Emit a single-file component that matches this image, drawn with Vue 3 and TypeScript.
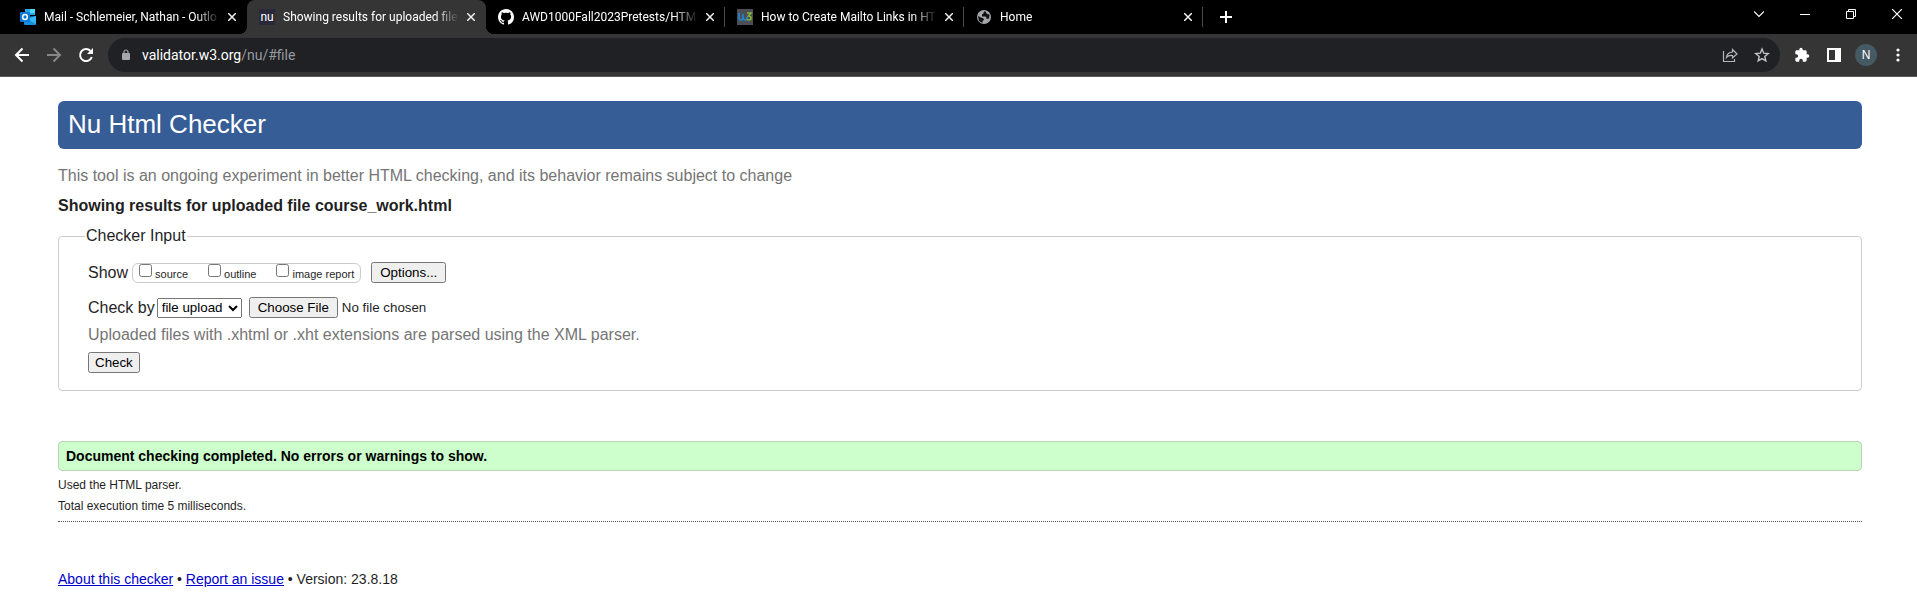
<script setup lang="ts">
import { ref } from 'vue'

interface Tab {
  icon: 'outlook' | 'nu' | 'github' | 'w3' | 'globe'
  title: string
  active?: boolean
  divider?: boolean
}

const tabs: Tab[] = [
  { icon: 'outlook', title: 'Mail - Schlemeier, Nathan - Outlo' },
  { icon: 'nu', title: 'Showing results for uploaded file', active: true },
  { icon: 'github', title: 'AWD1000Fall2023Pretests/HTML', divider: true },
  { icon: 'w3', title: 'How to Create Mailto Links in HT', divider: true },
  { icon: 'globe', title: 'Home', divider: true },
]

const showOptions = ['source', 'outline', 'image report']
const shown = ref<string[]>([])
const method = ref('file upload')
</script>

<template>
  <div class="browser">
    <header class="chrome">
      <div class="tabstrip">
        <div v-for="tab in tabs" :key="tab.title" class="tab" :class="{ active: tab.active, divider: tab.divider }">
          <svg v-if="tab.icon === 'outlook'" class="favicon" viewBox="0 0 16 16" aria-hidden="true">
            <path d="M5 0h10v6H5z" fill="#28a8ea" />
            <path d="M10 0h5v4h-5z" fill="#50d9ff" />
            <path d="M5 4h5v5H5z" fill="#0364b8" />
            <path d="M4 8l12-1v8q0 1-1 1H5q-1 0-1-1z" fill="#1490df" />
            <path d="M16 7v8l-9-5z" fill="#35b8f1" />
            <rect y="3" width="10" height="10" rx="1" fill="#0f78d4" />
            <ellipse cx="5" cy="8" rx="2.3" ry="2.5" fill="none" stroke="#fff" stroke-width="1.4" />
          </svg>
          <span v-else-if="tab.icon === 'nu'" class="favicon nu">nu</span>
          <svg v-else-if="tab.icon === 'github'" class="favicon" viewBox="0 0 16 16" aria-hidden="true">
            <path fill="#fff" d="M8 0C3.58 0 0 3.58 0 8c0 3.54 2.29 6.53 5.47 7.59.4.07.55-.17.55-.38 0-.19-.01-.82-.01-1.49-2.01.37-2.53-.49-2.69-.94-.09-.23-.48-.94-.82-1.13-.28-.15-.68-.52-.01-.53.63-.01 1.08.58 1.23.82.72 1.21 1.87.87 2.33.66.07-.52.28-.87.51-1.07-1.78-.2-3.64-.89-3.64-3.95 0-.87.31-1.59.82-2.15-.08-.2-.36-1.02.08-2.12 0 0 .67-.21 2.2.82.64-.18 1.32-.27 2-.27s1.36.09 2 .27c1.53-1.04 2.2-.82 2.2-.82.44 1.1.16 1.92.08 2.12.51.56.82 1.27.82 2.15 0 3.07-1.87 3.75-3.65 3.95.29.25.54.73.54 1.48 0 1.07-.01 1.93-.01 2.2 0 .21.15.46.55.38A8.01 8.01 0 0 0 16 8c0-4.42-3.58-8-8-8z" />
          </svg>
          <svg v-else-if="tab.icon === 'w3'" class="favicon" viewBox="0 0 16 16" aria-hidden="true">
            <rect width="16" height="16" fill="#4b4f55" />
            <path d="M2 4v4q0 3 2 3t2-3V5v3q0 3 2 3t2-3" fill="none" stroke="#2088d0" stroke-width="1.6" />
            <path d="M10 4h4l-2.500 3q2.500 0 2.500 2t-2 2-2-1" fill="none" stroke="#83b735" stroke-width="1.600" />
          </svg>
          <svg v-else class="favicon" viewBox="0 0 16 16" aria-hidden="true">
            <circle cx="8" cy="8" r="7" fill="#a4a8ac" />
            <path d="M9 2q-2 1-1.500 2.500L6 5.500v2h3.500l1 1v1.500l2.500-.5.500-4-2.500-.5-1-1.500z" fill="#111" />
            <path d="M2 7l3 1.500 2.500 1 .5 1.500-1.500 1v2L3 12z" fill="#111" />
          </svg>
          <span class="title">{{ tab.title }}</span>
          <button type="button" class="icon-button close" :aria-label="`Close ${tab.title}`">
            <svg width="8" height="8" viewBox="0 0 8 8"><path d="M0 0l8 8M8 0L0 8" fill="none" stroke="#f1f1f1" stroke-width="1.500" /></svg>
          </button>
        </div>
        <button type="button" class="icon-button new-tab" aria-label="New tab">
          <svg width="12" height="12" viewBox="0 0 12 12"><path d="M6 0v12M0 6h12" stroke="#fff" stroke-width="2" /></svg>
        </button>
        <div class="window-controls">
          <button type="button" class="icon-button" aria-label="Search tabs">
            <svg width="10" height="10" viewBox="0 0 10 10"><path d="M0 2.500l5 5 5-5" fill="none" stroke="#fff" stroke-width="1.200" /></svg>
          </button>
          <button type="button" class="icon-button" aria-label="Minimize">
            <svg width="10" height="10" viewBox="0 0 10 10"><path d="M0 5.500h10" stroke="#fff" /></svg>
          </button>
          <button type="button" class="icon-button" aria-label="Restore">
            <svg width="10" height="10" viewBox="0 0 10 10"><path d="M.5 2.500h7v7h-7zM2.500 2.500v-2h7v7h-2" fill="none" stroke="#fff" /></svg>
          </button>
          <button type="button" class="icon-button" aria-label="Close window">
            <svg width="10" height="10" viewBox="0 0 10 10"><path d="M0 0l10 10M10 0L0 10" stroke="#fff" stroke-width="1.200" /></svg>
          </button>
        </div>
      </div>

      <div class="toolbar">
        <button type="button" class="icon-button tool" aria-label="Back">
          <svg width="16" height="16" viewBox="0 0 16 16"><path d="M15 8H2M8.500 1.500L2 8l6.500 6.500" fill="none" stroke="#fff" stroke-width="2" /></svg>
        </button>
        <button type="button" class="icon-button tool" aria-label="Forward">
          <svg width="16" height="16" viewBox="0 0 16 16"><path d="M1 8h13M7.500 1.500L14 8l-6.500 6.500" fill="none" stroke="#868686" stroke-width="2" /></svg>
        </button>
        <button type="button" class="icon-button tool" aria-label="Reload">
          <svg width="16" height="16" viewBox="0 0 16 16"><path d="M13.800 10A6 6 0 1 1 12.500 4" fill="none" stroke="#fff" stroke-width="2" /><path d="M15 1v6H9z" fill="#fff" /></svg>
        </button>
        <div class="address">
          <svg class="lock" width="10" height="12" viewBox="0 0 10 12" aria-hidden="true">
            <rect x="1" y="4" width="8" height="7" rx="1" fill="#a4a8ac" />
            <path d="M3 5V3a2 2 0 0 1 4 0v2" fill="none" stroke="#a4a8ac" stroke-width="1.200" />
          </svg>
          <span class="url"><span class="host">validator.w3.org</span>/nu/#file</span>
          <button type="button" class="icon-button" aria-label="Share this page">
            <svg width="16" height="16" viewBox="0 0 16 16"><path d="M1.500 4v10.500h11V12M4.500 10.500q.5-5 6-5.500V2.500L15 7l-4.500 4V8.500q-4-.5-6 2z" fill="none" stroke="#b4b6b8" stroke-width="1.200" /></svg>
          </button>
          <button type="button" class="icon-button" aria-label="Bookmark this page">
            <svg width="16" height="16" viewBox="0 0 16 16"><path d="M8 2l1.700 4.200 4.500.4-3.400 2.900 1 4.400L8 11.600l-3.800 2.300 1-4.400-3.400-2.900 4.500-.4z" fill="none" stroke="#c4c7c9" stroke-width="1.400" /></svg>
          </button>
        </div>
        <button type="button" class="icon-button tool" aria-label="Extensions">
          <svg width="16" height="16" viewBox="0 0 24 24"><path fill="#fff" d="M20.500 11H19V7c0-1.100-.9-2-2-2h-4V3.500a2.500 2.500 0 0 0-5 0V5H4c-1.100 0-2 .9-2 2v3.800h1.500a2.700 2.700 0 0 1 0 5.400H2V20c0 1.100.9 2 2 2h3.800v-1.500a2.700 2.700 0 0 1 5.400 0V22H17c1.100 0 2-.9 2-2v-4h1.500a2.500 2.500 0 0 0 0-5z" /></svg>
        </button>
        <button type="button" class="icon-button tool" aria-label="Side panel">
          <svg width="14" height="14" viewBox="0 0 14 14"><path fill="#fff" fill-rule="evenodd" d="M0 0h14v14H0zM2 2v10h6V2z" /></svg>
        </button>
        <button type="button" class="icon-button tool" aria-label="Profile"><span class="avatar">N</span></button>
        <button type="button" class="icon-button tool" aria-label="Menu">
          <svg width="4" height="14" viewBox="0 0 4 14"><g fill="#fff"><circle cx="2" cy="2" r="1.600" /><circle cx="2" cy="7" r="1.600" /><circle cx="2" cy="12" r="1.600" /></g></svg>
        </button>
      </div>
    </header>

    <main class="page">
      <h1>Nu Html Checker</h1>
      <p class="note">This tool is an ongoing experiment in better HTML checking, and its behavior remains subject to change</p>
      <h2>Showing results for uploaded file course_work.html</h2>

      <form @submit.prevent>
        <fieldset class="checker">
          <legend>Checker Input</legend>
          <div class="row show-row">
            <span>Show</span>
            <div class="show-options" role="group" aria-label="Show">
              <label v-for="option in showOptions" :key="option">
                <input v-model="shown" type="checkbox" :value="option" />
                <span>{{ option }}</span>
              </label>
            </div>
            <button type="button">Options...</button>
          </div>
          <div class="row method-row">
            <label for="method">Check by</label>
            <select id="method" v-model="method">
              <option>address</option>
              <option>file upload</option>
              <option>text input</option>
            </select>
            <input type="file" aria-label="File to check" />
          </div>
          <p class="note">Uploaded files with .xhtml or .xht extensions are parsed using the XML parser.</p>
          <button type="submit" class="submit">Check</button>
        </fieldset>
      </form>

      <p class="success">Document checking completed. No errors or warnings to show.</p>
      <div class="stats">
        <p>Used the HTML parser.</p>
        <p>Total execution time 5 milliseconds.</p>
      </div>

      <footer>
        <a href="#about">About this checker</a> • <a href="#issue">Report an issue</a> • Version: 23.8.18
      </footer>
    </main>
  </div>
</template>

<style>
body {
  margin: 0;
  background: #fff;
}
</style>

<style scoped>
* {
  box-sizing: border-box;
}
svg {
  display: block;
}
.chrome {
  font-family: Roboto, "Open Sans", sans-serif;
  font-size: 12px;
  color: #fff;
}
.icon-button {
  display: flex;
  flex: none;
  align-items: center;
  justify-content: center;
  padding: 0;
  border: 0;
  background: none;
  color: inherit;
}
.tabstrip {
  display: flex;
  height: 34px;
  padding-left: 8px;
  background: #000;
}
.tab {
  position: relative;
  display: flex;
  align-items: center;
  flex: 0 1 239px;
  min-width: 0;
  padding: 0 7px 0 12px;
}
.tab.active {
  background: #353535;
  border-radius: 8px 8px 0 0;
}
.tab.active::before,
.tab.active::after {
  content: "";
  position: absolute;
  bottom: 0;
  width: 8px;
  height: 8px;
}
.tab.active::before {
  right: 100%;
  background: radial-gradient(circle at 0 0, transparent 8px, #353535 8px);
}
.tab.active::after {
  left: 100%;
  background: radial-gradient(circle at 100% 0, transparent 8px, #353535 8px);
}
.tab.divider {
  background: linear-gradient(#4a4a4a, #4a4a4a) right center / 1px 20px no-repeat;
}
.favicon {
  flex: none;
  width: 16px;
  height: 16px;
}
.nu {
  background: #2a293c;
  font-size: 12px;
  line-height: 16px;
  text-align: center;
}
.title {
  flex: 1;
  min-width: 0;
  margin: 0 4px 0 8px;
  overflow: hidden;
  white-space: nowrap;
  line-height: 16px;
  mask-image: linear-gradient(to right, #000 calc(100% - 24px), transparent);
}
.close {
  width: 16px;
  height: 16px;
}
.new-tab {
  width: 28px;
  margin-left: 9px;
}
.window-controls {
  display: flex;
  margin-left: auto;
  height: 28px;
}
.window-controls .icon-button {
  width: 46px;
}
.window-controls .icon-button:last-child {
  width: 40px;
  margin-left: 3px;
}
.toolbar {
  display: flex;
  align-items: center;
  height: 43px;
  padding: 0 3px 0 6px;
  background: #353535;
  border-bottom: 1px solid #5a5a5a;
}
.tool {
  width: 32px;
  height: 32px;
}
.address {
  display: flex;
  align-items: center;
  flex: 1;
  height: 34px;
  margin: 0 6px;
  padding: 0 2px 0 13px;
  border-radius: 17px;
  background: #202124;
}
.address .icon-button {
  width: 32px;
  height: 32px;
}
.url {
  flex: 1;
  margin-left: 11px;
  font-size: 14px;
  line-height: 20px;
  color: #969a9e;
}
.host {
  color: #fff;
}
.avatar {
  width: 22px;
  height: 22px;
  border-radius: 50%;
  background: #455a64;
  font-size: 12px;
  line-height: 22px;
}
.page {
  padding: 24px 55px 16px 58px;
  font-family: "Liberation Sans", Arial, sans-serif;
  font-size: 16px;
  line-height: 20px;
  color: #1f1f1f;
}
.page button,
.page select,
.page input {
  font-family: "Liberation Sans", Arial, sans-serif;
}
h1 {
  margin: 0 0 17px;
  padding: 0 10px 2px;
  border-radius: 6px;
  background: #365d95;
  color: #fff;
  font-size: 26px;
  font-weight: 400;
  line-height: 46px;
}
p {
  margin: 0;
}
.note {
  color: #757575;
}
h2 {
  margin: 10px 0;
  font-size: 16px;
  line-height: 20px;
}
.checker {
  margin: 0;
  min-width: 0;
  padding: 16px 29px 17px;
  border: 1px solid #ccc;
  border-radius: 4px;
}
legend {
  margin-left: -3px;
  padding: 0 1px;
}
.row {
  display: flex;
  align-items: center;
}
.show-options {
  display: flex;
  gap: 20px;
  height: 20px;
  margin: 0 10px 0 4px;
  padding: 0 6px;
  border: 1px solid #ccc;
  border-radius: 6px;
  font-size: 11px;
}
.show-options label {
  display: flex;
  gap: 3px;
}
.show-options input {
  width: 13px;
  height: 13px;
  margin: 0;
}
.page button {
  height: 21px;
  padding: 0 5px;
}
.page .show-row button {
  padding: 0 7px;
}
.method-row {
  margin: 14px 0 7px;
}
.method-row select {
  width: 85px;
  height: 20px;
  margin: 0 7px 0 2px;
}
.method-row input::file-selector-button {
  padding: 1px 7px;
}
.submit {
  display: block;
  margin-top: 7px;
}
.success {
  margin-top: 50px;
  padding: 0 7px;
  border: 1px solid #b5d6b5;
  border-radius: 4px;
  background: #cfc;
  color: #000;
  font-size: 14px;
  font-weight: 700;
  line-height: 28px;
}
.stats {
  padding: 4px 0;
  border-bottom: 1px dotted #555;
  font-size: 12px;
  line-height: 21px;
}
footer {
  margin-top: 47px;
  font-size: 14px;
}
a {
  color: #00c;
}
</style>
